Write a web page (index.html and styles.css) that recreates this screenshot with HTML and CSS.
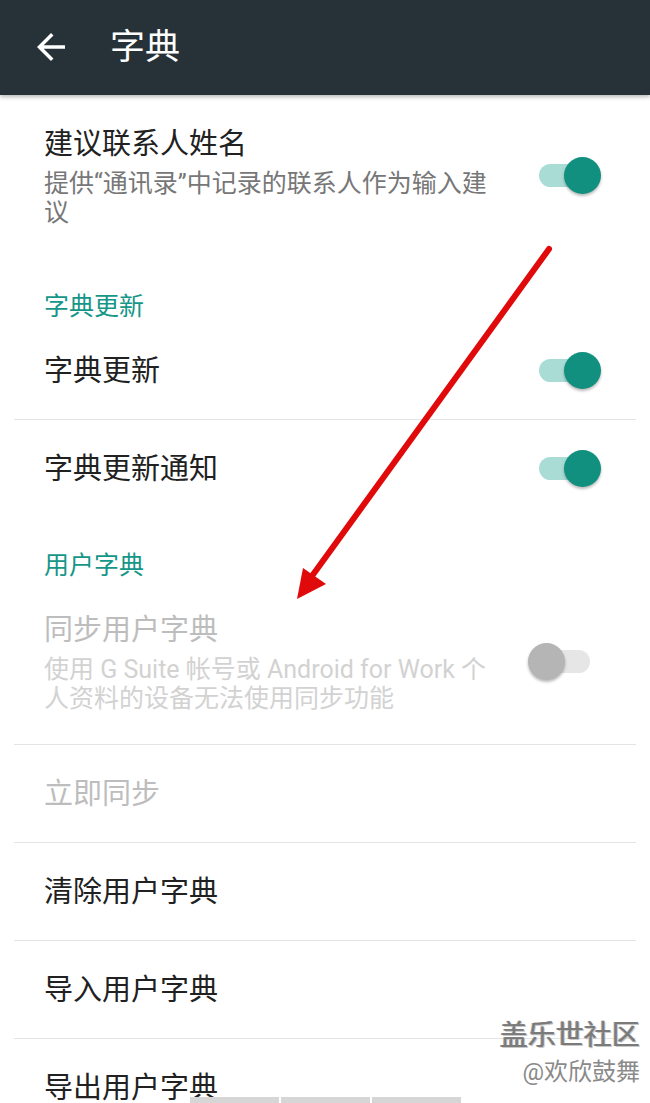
FILE: index.html
```html
<!DOCTYPE html>
<html>
<head>
  <meta charset="utf-8">
  <title>字典</title>
  <link rel="stylesheet" href="styles.css">
</head>
<body>
  <header class="toolbar">
    <svg class="back" viewBox="0 0 24 24" width="42" height="42">
      <path d="M20 11H7.83l5.59-5.59L12 4l-8 8 8 8 1.41-1.41L7.83 13H20v-2z" fill="#fff"/>
    </svg>
    <h1 class="toolbar-title">字典</h1>
  </header>

  <main class="prefs">
    <div class="pref pref-multi">
      <div class="pref-text">
        <div class="pref-title">建议联系人姓名</div>
        <div class="pref-summary">提供“通讯录”中记录的联系人作为输入建议</div>
      </div>
      <span class="switch on"><span class="track"></span><span class="thumb"></span></span>
    </div>

    <div class="category">字典更新</div>

    <div class="pref">
      <div class="pref-text"><div class="pref-title">字典更新</div></div>
      <span class="switch on"><span class="track"></span><span class="thumb"></span></span>
    </div>
    <div class="pref">
      <div class="pref-text"><div class="pref-title">字典更新通知</div></div>
      <span class="switch on"><span class="track"></span><span class="thumb"></span></span>
    </div>

    <div class="category">用户字典</div>

    <div class="pref pref-multi disabled">
      <div class="pref-text">
        <div class="pref-title">同步用户字典</div>
        <div class="pref-summary">使用 G Suite 帐号或 Android for Work 个人资料的设备无法使用同步功能</div>
      </div>
      <span class="switch off"><span class="track"></span><span class="thumb"></span></span>
    </div>
    <div class="pref disabled">
      <div class="pref-text"><div class="pref-title">立即同步</div></div>
    </div>
    <div class="pref">
      <div class="pref-text"><div class="pref-title">清除用户字典</div></div>
    </div>
    <div class="pref">
      <div class="pref-text"><div class="pref-title">导入用户字典</div></div>
    </div>
    <div class="pref">
      <div class="pref-text"><div class="pref-title">导出用户字典</div></div>
    </div>
  </main>

  <svg class="annotation" viewBox="0 0 650 1103" width="650" height="1103">
    <line x1="549" y1="249" x2="312" y2="576" stroke="#e10a0a" stroke-width="6" stroke-linecap="round"/>
    <polygon points="297,599 303,568 326,584" fill="#e10a0a"/>
  </svg>

  <div class="watermark">
    <div class="wm-main">盖乐世社区</div>
    <div class="wm-sub">@欢欣鼓舞</div>
  </div>

  <div class="bottom-keys">
    <span></span><span></span><span></span>
  </div>
</body>
</html>
```

FILE: styles.css
```css
html, body {
  margin: 0;
  height: 1103px;
  overflow: hidden;
}

body {
  font-family: Roboto, "Noto Sans CJK SC", sans-serif;
  background: #fff;
  position: relative;
}

.toolbar {
  height: 95px;
  background: #263238;
  display: flex;
  align-items: center;
  box-shadow: 0 2px 4px rgba(0, 0, 0, 0.28);
  position: relative;
  z-index: 1;
}

.back {
  margin-left: 30px;
  margin-top: -1px;
}

.toolbar-title {
  margin: 0 0 0 38px;
  font-size: 35px;
  font-weight: normal;
  color: #fff;
  line-height: 40px;
}

.prefs {
  margin: 0 14px;
}

.pref {
  height: 97px;
  padding: 0 35px 0 30px;
  display: flex;
  align-items: center;
  gap: 24px;
}

.pref + .pref {
  border-top: 1px solid #e4e4e4;
}

.pref-multi {
  height: auto;
  padding-top: 29px;
  padding-bottom: 31px;
}

.pref-text {
  flex: 1;
  min-width: 0;
}

.pref-title {
  font-size: 29px;
  line-height: 40px;
  color: #212121;
}

.pref-summary {
  margin-top: 5px;
  font-size: 25px;
  line-height: 29px;
  color: #777;
}

.disabled .pref-title {
  color: #bdbdbd;
}

.disabled .pref-summary {
  color: #d2d2d2;
}

.category {
  height: 64px;
  box-sizing: border-box;
  padding: 35px 0 0 30px;
  font-size: 25px;
  line-height: 28px;
  color: #159688;
}

.switch {
  position: relative;
  width: 73px;
  height: 37px;
  flex: none;
}

.switch .track {
  position: absolute;
  left: 11px;
  right: 11px;
  top: 7px;
  height: 23px;
  border-radius: 12px;
  background: #aadcd6;
}

.switch .thumb {
  position: absolute;
  top: 0;
  width: 37px;
  height: 37px;
  border-radius: 50%;
  box-shadow: 0 2px 3px rgba(0, 0, 0, 0.28);
}

.switch.on .thumb {
  right: 0;
  background: #11907f;
}

.switch.off .track {
  background: #e6e6e6;
}

.switch.off .thumb {
  left: 0;
  background: #b5b5b5;
}

.annotation {
  position: absolute;
  top: 0;
  left: 0;
  pointer-events: none;
  z-index: 2;
}

.watermark {
  position: absolute;
  right: 10px;
  top: 1018px;
  text-align: right;
  z-index: 3;
}

.wm-main {
  font-size: 28px;
  line-height: 36px;
  color: #7a7a7a;
  text-shadow: 1px 1px 0 #c8c8c8, -1px 0 0 #9a9a9a;
}

.wm-sub {
  margin-top: 3px;
  font-size: 24px;
  line-height: 30px;
  color: #8a8a8a;
}

.bottom-keys {
  position: absolute;
  left: 190px;
  top: 1097px;
  display: flex;
  gap: 2px;
  z-index: 3;
}

.bottom-keys span {
  width: 89px;
  height: 6px;
  background: #d6d6d6;
}
```
